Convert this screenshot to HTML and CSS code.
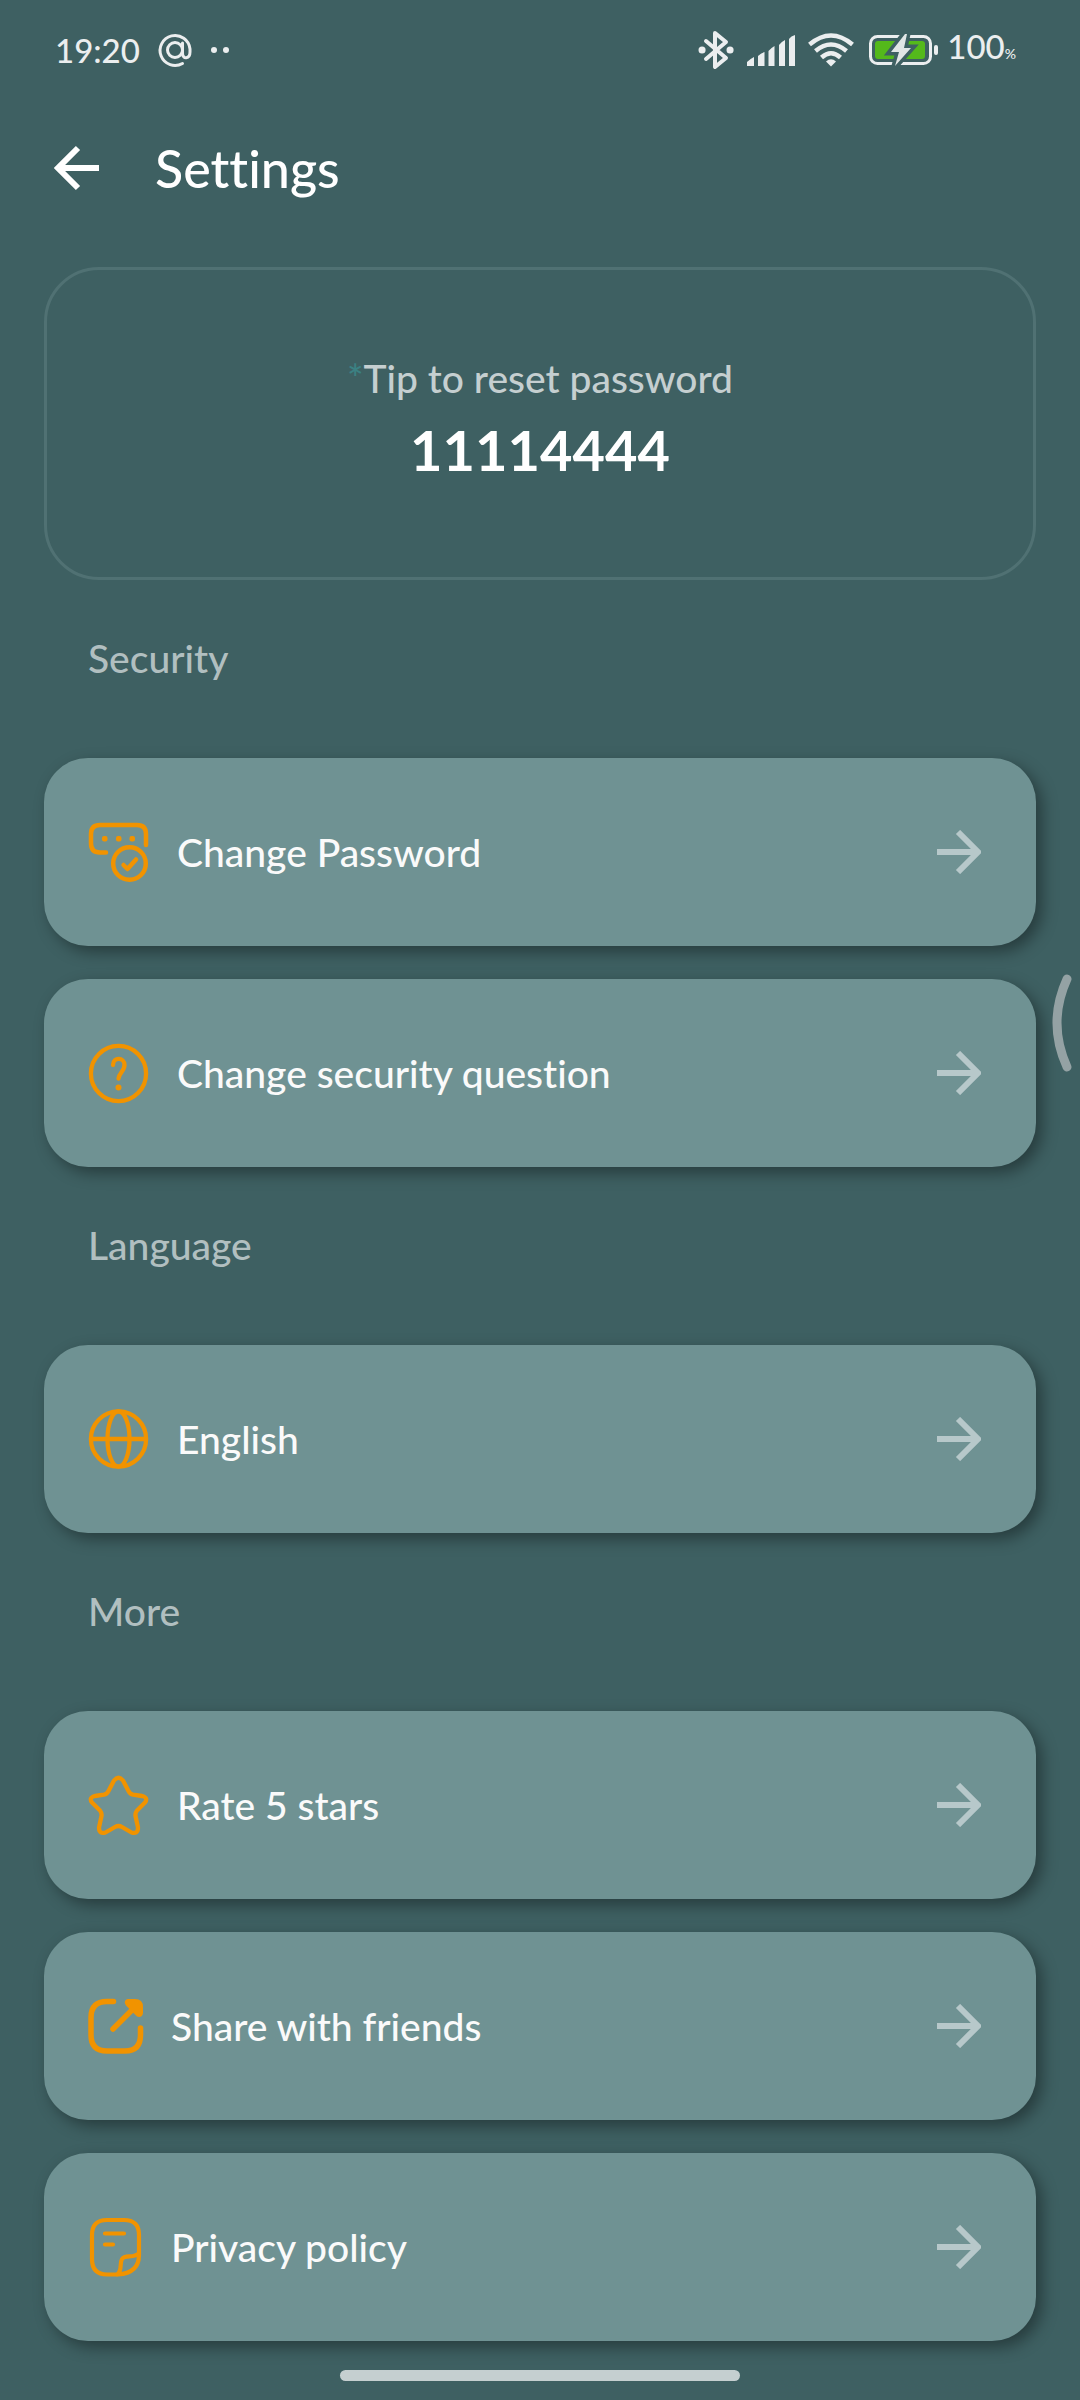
FILE: index.html
```html
<!DOCTYPE html>
<html lang="en">
<head>
<meta charset="utf-8">
<meta name="viewport" content="width=device-width, initial-scale=1">
<title>Settings</title>
<link rel="stylesheet" href="styles.css">
</head>
<body>
<svg class="sprite" aria-hidden="true">
  <symbol id="arrow" viewBox="0 0 44 44"><path d="M0 22H40M21 2L41 22L21 42" fill="none" stroke="currentColor" stroke-width="6"/></symbol>
</svg>

<div class="status">
  <span class="time">19:20</span>
  <svg class="at" viewBox="0 0 34 36" fill="none" stroke="currentColor" stroke-width="3" stroke-linecap="round" aria-hidden="true">
    <circle cx="17" cy="18" r="7.500"/>
    <path d="M24.500 11V21C24.500 28 32 27 32 20V17A15 15 0 1 0 24.500 31.500"/>
  </svg>
  <svg class="dots" viewBox="0 0 20 8" fill="currentColor" aria-hidden="true"><circle cx="4" cy="4" r="3"/><circle cx="16" cy="4" r="3"/></svg>
  <div class="indicators">
    <svg class="bluetooth" viewBox="0 0 36 40" fill="none" stroke="currentColor" stroke-width="4" stroke-linejoin="round" stroke-linecap="round" aria-hidden="true">
      <path d="M8 11L28 28L17 37V3L28 12L8 29"/>
      <path d="M4 20h.1M32 20h.1" stroke-width="7"/>
    </svg>
    <svg class="signal" viewBox="0 0 48 31" fill="currentColor" aria-hidden="true">
      <path d="M0 31V27Q3 24 7 22V31ZM11 31V21Q14 18 17.500 17V31ZM21.500 31V16Q24 13 27.500 11V31ZM32 31V10Q34 7 38 5V31ZM42 31V4Q44 1 48 0V31Z"/>
    </svg>
    <svg class="wifi" viewBox="0 0 46 34" aria-hidden="true">
      <g fill="none" stroke="currentColor" stroke-width="4.500"><path d="M1.500 11.500Q23-6.500 44.500 11.500"/><path d="M7.500 18Q23 5 38.500 18"/><path d="M13.500 24.500Q23 16 32.500 24.500"/></g>
      <path d="M23 33.500L18 28.500Q23 24 28 28.500Z" fill="currentColor"/>
    </svg>
    <svg class="battery" viewBox="0 0 70 32" aria-hidden="true">
      <rect x="1.500" y="2.500" width="60" height="27" rx="7" fill="none" stroke="currentColor" stroke-width="3"/>
      <rect x="6" y="7" width="50" height="18" rx="3" fill="#54b91b"/>
      <rect x="65" y="11" width="4" height="10" rx="2" fill="currentColor"/>
      <path d="M36 0L22 18H30L26 32L42 14H35L38 0Z" fill="#e1e6e6" stroke="#3e6062" stroke-width="7" paint-order="stroke"/>
    </svg>
    <span class="charge">100<small>%</small></span>
  </div>
</div>

<header class="topbar">
  <button class="back" type="button" aria-label="Back"><svg viewBox="0 0 44 44" aria-hidden="true"><path d="M44 22H4M23 2L3 22L23 42" fill="none" stroke="currentColor" stroke-width="6"/></svg></button>
  <h1>Settings</h1>
</header>

<main>
  <section class="tip">
    <p class="tip-label"><span>*</span>Tip to reset password</p>
    <p class="tip-code">11114444</p>
  </section>

  <h2>Security</h2>
  <ul>
    <li><a class="row" href="#password">
      <svg class="icon" viewBox="0 0 61 60" aria-hidden="true">
        <g fill="none" stroke="currentColor" stroke-width="4.500" stroke-linecap="round" stroke-linejoin="round">
          <path d="M18 30.500H12Q3 30.500 3 21.500V12Q3 3 12 3H49Q58 3 58 12V23"/>
          <circle cx="41.500" cy="41.500" r="16.300"/>
          <path d="M35.500 43L39.500 47L48 37.500"/>
        </g>
        <g fill="currentColor"><rect x="14" y="14" width="5.500" height="5.500" rx="2"/><rect x="28" y="14" width="5.500" height="5.500" rx="2"/><rect x="41.500" y="14" width="5.500" height="5.500" rx="2"/></g>
      </svg>
      <span>Change Password</span><svg class="go" aria-hidden="true"><use href="#arrow"/></svg></a></li>
    <li><a class="row" href="#question">
      <svg class="icon" viewBox="0 0 61 60" aria-hidden="true">
        <g fill="none" stroke="currentColor" stroke-width="4.300" stroke-linecap="round">
          <circle cx="30.500" cy="30.500" r="27.600"/>
          <path d="M25 22C25 13.500 36.500 14 36.500 22C36.500 28 31 30 30.500 35.500"/>
        </g>
        <circle cx="30.500" cy="44.500" r="3" fill="currentColor"/>
      </svg>
      <span>Change security question</span><svg class="go" aria-hidden="true"><use href="#arrow"/></svg></a></li>
  </ul>

  <h2>Language</h2>
  <ul>
    <li><a class="row" href="#language">
      <svg class="icon" viewBox="0 0 61 60" fill="none" stroke="currentColor" stroke-width="4.300" aria-hidden="true">
        <circle cx="30.500" cy="30" r="27.600"/><ellipse cx="30.500" cy="30" rx="11" ry="27.600"/><path d="M3 30H58"/>
      </svg>
      <span>English</span><svg class="go" aria-hidden="true"><use href="#arrow"/></svg></a></li>
  </ul>

  <h2>More</h2>
  <ul>
    <li><a class="row" href="#rate">
      <svg class="icon" viewBox="0 0 61 60" fill="none" stroke="currentColor" stroke-width="4.300" stroke-linejoin="round" aria-hidden="true">
        <path d="M26 5.500Q30.500 0 35 5.500L40.500 16Q42 19 45 19.700L54 21Q60.500 22.500 57 27.500L49 35.500Q47 38 47.500 41L50 52.500Q50 59.500 43.500 57.500L34 52Q30.500 50 27 52L17.500 57.500Q11 59.500 11 52.500L13.500 41Q14 38 12 35.500L4 27.500Q.500 22.500 7 21L16 19.700Q19 19 20.500 16Z"/>
      </svg>
      <span>Rate 5 stars</span><svg class="go" aria-hidden="true"><use href="#arrow"/></svg></a></li>
    <li><a class="row" href="#share">
      <svg class="icon slim" viewBox="0 0 55 60" aria-hidden="true">
        <path d="M25.500 5.500H19Q3 5.500 3 21.500V39Q3 55 19 55H37Q52.500 55 52.500 39V32M25 33L45 13" fill="none" stroke="currentColor" stroke-width="5.500" stroke-linecap="round"/>
        <path d="M40 3H47Q55 3 55 11V17Q54.500 21 51 21Q49 21 47 18.500L38 9.500Q36 7 37 5Q38 3 40 3Z" fill="currentColor"/>
      </svg>
      <span>Share with friends</span><svg class="go" aria-hidden="true"><use href="#arrow"/></svg></a></li>
    <li><a class="row" href="#privacy">
      <svg class="icon slim" viewBox="0 0 55 60" fill="none" stroke="currentColor" stroke-width="4.200" stroke-linecap="round" stroke-linejoin="round" aria-hidden="true">
        <path d="M51 38V18Q51 3 36 3H19Q4 3 4 18V42Q4 57.500 19 57.500H30Q51 56 51 38ZM29 57.500C35 53 31 47 34 42C37 37 46 42 51 36M17 16.500H36M17 27.500H25"/>
      </svg>
      <span>Privacy policy</span><svg class="go" aria-hidden="true"><use href="#arrow"/></svg></a></li>
  </ul>
</main>
<div class="home"></div>
<svg class="edge" viewBox="0 0 20 98" aria-hidden="true"><path d="M15 5Q-5 49 15 93" fill="none" stroke="#94a2a4" stroke-width="9" stroke-linecap="round"/></svg>
</body>
</html>
```
FILE: styles.css
```css
* { box-sizing: border-box; }

body {
  position: relative;
  margin: 0;
  background: #3e6062;
  color: #fff;
  font-family: Lato, "Open Sans", sans-serif;
  font-size: 39px;
  font-weight: 500;
  font-variant-ligatures: none;
}

h1, h2, p, ul { margin: 0; padding: 0; font-weight: 500; }
ul { list-style: none; display: grid; gap: 33px; }
svg { display: block; flex: none; overflow: visible; }
.sprite { position: absolute; width: 0; height: 0; }

.status {
  display: flex;
  align-items: center;
  height: 100px;
  padding: 0 64px 0 55px;
  color: #ebeeef;
  font-size: 33px;
}
.at { width: 34px; height: 36px; margin-left: 18px; }
.dots { width: 20px; height: 8px; margin-left: 18px; }
.indicators { display: flex; align-items: center; margin-left: auto; }
.bluetooth { width: 36px; height: 40px; margin-right: 13px; }
.signal { width: 48px; height: 31px; margin-right: 13px; }
.wifi { width: 46px; height: 34px; margin-right: 15px; }
.battery { width: 70px; height: 32px; margin-right: 8px; }
.charge { line-height: 40px; }
.charge small { font-size: 14px; }

.topbar {
  display: flex;
  align-items: center;
  gap: 56px;
  height: 136px;
  padding: 0 55px;
}
.back { padding: 0; border: 0; background: none; color: inherit; }
.back svg { width: 44px; height: 44px; }
h1 { font-size: 52px; line-height: 60px; }

main { padding: 31px 44px 0; }

.tip {
  display: flex;
  flex-direction: column;
  align-items: center;
  padding: 82px 24px;
  border: 3px solid #507173;
  border-radius: 55px;
}
.tip-label { color: #c5cfd0; line-height: 52px; }
.tip-label span { color: #3b8183; }
.tip-code { font-size: 56px; font-weight: 700; line-height: 91px; }

h2 {
  padding: 54px 44px 76px;
  color: #b1bfc0;
  font-size: 39px;
  line-height: 48px;
}

.row {
  display: flex;
  align-items: center;
  gap: 28px;
  height: 188px;
  padding: 0 55px 0 44px;
  border-radius: 44px;
  background: #6f9293;
  box-shadow: 6px 6px 16px rgba(0, 0, 0, .38);
  color: #fafafa;
  text-decoration: none;
}
.row span { flex: 1; }
.icon { width: 61px; height: 60px; color: #f19300; }
.slim { width: 55px; }
.go { width: 44px; height: 44px; color: #b7c8ca; }

.home {
  width: 37%;
  height: 11px;
  margin: 29px auto 19px;
  border-radius: 6px;
  background: #c5cfd0;
}

.edge {
  position: absolute;
  top: 974px;
  right: 8px;
  width: 20px;
  height: 98px;
}
```
